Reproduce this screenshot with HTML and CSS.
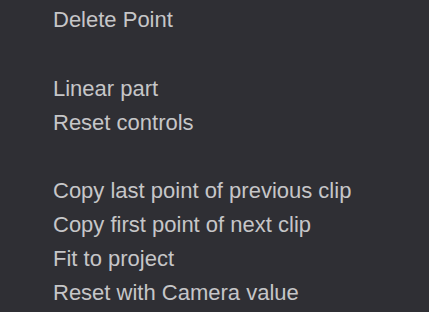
FILE: index.html
```html
<!DOCTYPE html>
<html>
<head>
<meta charset="utf-8">
<link rel="stylesheet" href="styles.css">
</head>
<body>
<ul class="menu">
  <li class="item">Delete Point</li>
  <li class="sep"></li>
  <li class="item">Linear part</li>
  <li class="item">Reset controls</li>
  <li class="sep"></li>
  <li class="item">Copy last point of previous clip</li>
  <li class="item">Copy first point of next clip</li>
  <li class="item">Fit to project</li>
  <li class="item">Reset with Camera value</li>
</ul>
</body>
</html>
```
FILE: styles.css
```css
html, body {
  margin: 0;
  padding: 0;
  background: #2f2f34;
  width: 429px;
  height: 312px;
  overflow: hidden;
}
.menu {
  list-style: none;
  margin: 0;
  padding: 3px 0 0 53px;
  display: flex;
  flex-direction: column;
  font-family: "Liberation Sans", Arial, sans-serif;
  font-size: 22px;
  color: #c6c6c8;
}
.item {
  height: 34px;
  line-height: 34px;
  white-space: nowrap;
}
.sep {
  height: 34.5px;
}
```
